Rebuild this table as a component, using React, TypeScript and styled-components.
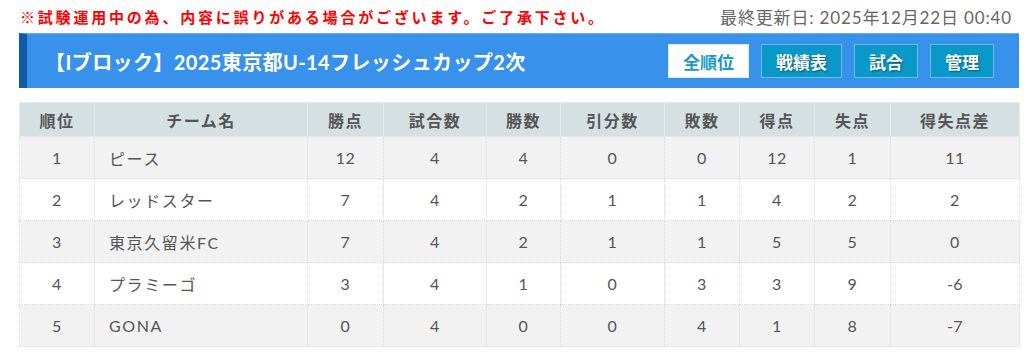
import React from "react"
import styled, { createGlobalStyle } from "styled-components"

const GlobalStyle = createGlobalStyle`
  html, body {
    margin: 0;
    padding: 0;
    background: #fff;
  }
  body {
    font-family: Lato, "Noto Sans CJK JP", sans-serif;
    color: #555;
  }
`

const Page = styled.div`
  width: 1000px;
  padding: 0 5px 0 19px;
`

const Notice = styled.div`
  display: flex;
  align-items: center;
  justify-content: space-between;
  height: 33px;
`

const Warning = styled.span`
  margin-left: 1px;
  color: #f00;
  font-size: 15px;
  font-weight: 700;
  letter-spacing: 2.8px;
`

const Updated = styled.span`
  margin-right: 7px;
  color: #666;
  font-size: 17px;
  letter-spacing: 0.85px;
`

const TitleBar = styled.div`
  display: flex;
  align-items: center;
  justify-content: space-between;
  height: 55px;
  box-sizing: border-box;
  padding: 0 25px 0 18px;
  background: #3891eb;
  border-top: 1px solid #6ab0f2;
  border-left: 8px solid #105ba6;
`

const Title = styled.h1`
  margin: 0;
  color: #fff;
  font-size: 20px;
  font-weight: 700;
  letter-spacing: 0.4px;
`

const Nav = styled.div`
  display: flex;
  gap: 12px;
`

const NavButton = styled.a<{ $active?: boolean }>`
  display: flex;
  align-items: center;
  height: 34px;
  box-sizing: border-box;
  padding: 0 14px;
  font-size: 17px;
  font-weight: 700;
  text-decoration: none;
  border: 1px solid ${p => (p.$active ? "#d8ecf8" : "#6cbde6")};
  background: ${p => (p.$active ? "#fff" : "#0999c9")};
  color: ${p => (p.$active ? "#1a98cc" : "#fff")};
  text-shadow: ${p => (p.$active ? "none" : "1px 1px 2px rgba(0,0,0,0.45)")};
`

const Table = styled.table`
  margin-top: 14px;
  width: 1000px;
  border-collapse: collapse;
  table-layout: fixed;
  font-size: 16px;
`

const Th = styled.th`
  height: 33px;
  padding: 0;
  background: #d4e0e1;
  color: #555;
  font-weight: 700;
  text-align: center;
  border: 1px solid #e4eaea;
  letter-spacing: 1.5px;
`

const Row = styled.tr<{ $odd: boolean }>`
  background: ${p => (p.$odd ? "#f2f2f2" : "#fff")};
`

const Td = styled.td<{ $left?: boolean }>`
  height: 41px;
  padding: ${p => (p.$left ? "0 0 0 14px" : "0")};
  text-align: ${p => (p.$left ? "left" : "center")};
  color: #555;
  border: 1px dotted #dcdcdc;
  letter-spacing: ${p => (p.$left ? "1.6px" : "0.5px")};
`

const columns = [
  { label: "順位", width: 75 },
  { label: "チーム名", width: 213 },
  { label: "勝点", width: 76 },
  { label: "試合数", width: 103 },
  { label: "勝数", width: 74 },
  { label: "引分数", width: 104 },
  { label: "敗数", width: 75 },
  { label: "得点", width: 75 },
  { label: "失点", width: 76 },
  { label: "得失点差", width: 129 },
]

const rows: (string | number)[][] = [
  [1, "ピース", 12, 4, 4, 0, 0, 12, 1, 11],
  [2, "レッドスター", 7, 4, 2, 1, 1, 4, 2, 2],
  [3, "東京久留米FC", 7, 4, 2, 1, 1, 5, 5, 0],
  [4, "プラミーゴ", 3, 4, 1, 0, 3, 3, 9, -6],
  [5, "GONA", 0, 4, 0, 0, 4, 1, 8, -7],
]

export default function App() {
  return (
    <>
      <GlobalStyle />
      <Page>
        <Notice>
          <Warning>※試験運用中の為、内容に誤りがある場合がございます。ご了承下さい。</Warning>
          <Updated>最終更新日: 2025年12月22日 00:40</Updated>
        </Notice>
        <TitleBar>
          <Title>【Iブロック】2025東京都U-14フレッシュカップ2次</Title>
          <Nav>
            <NavButton $active>全順位</NavButton>
            <NavButton>戦績表</NavButton>
            <NavButton>試合</NavButton>
            <NavButton>管理</NavButton>
          </Nav>
        </TitleBar>
        <Table>
          <colgroup>
            {columns.map(c => (
              <col key={c.label} style={{ width: c.width }} />
            ))}
          </colgroup>
          <thead>
            <tr>
              {columns.map(c => (
                <Th key={c.label}>{c.label}</Th>
              ))}
            </tr>
          </thead>
          <tbody>
            {rows.map((r, i) => (
              <Row key={i} $odd={i % 2 === 0}>
                {r.map((v, j) => (
                  <Td key={j} $left={j === 1}>
                    {v}
                  </Td>
                ))}
              </Row>
            ))}
          </tbody>
        </Table>
      </Page>
    </>
  )
}
